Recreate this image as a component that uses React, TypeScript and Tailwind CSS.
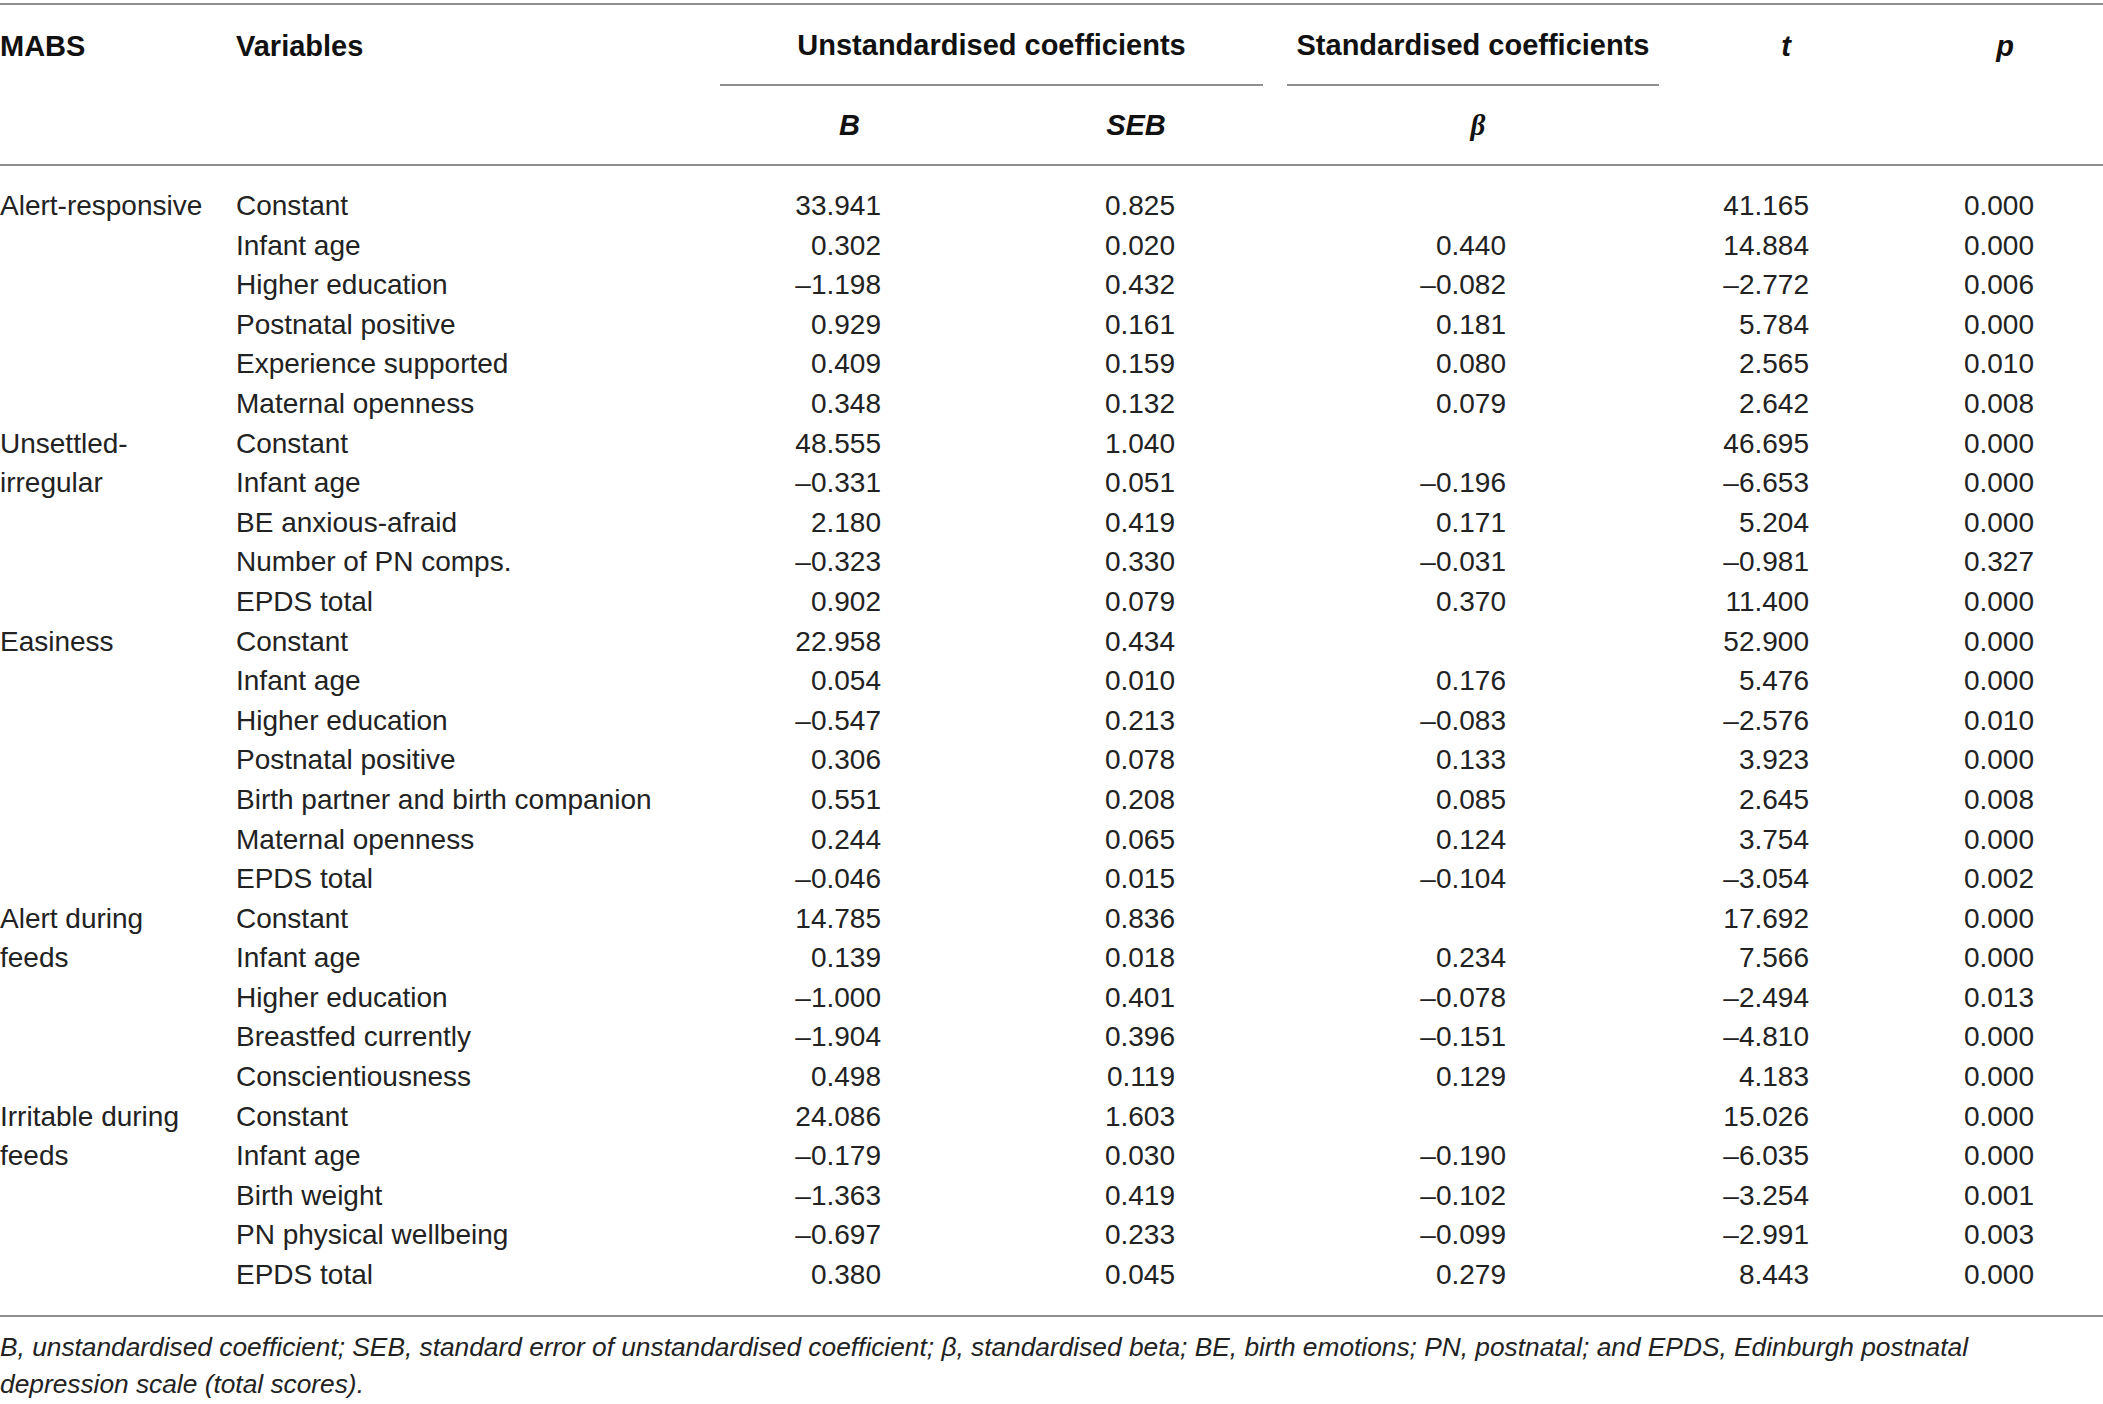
type Row = [string, string, string, string, string, string];

type Group = { label: string[]; rows: Row[] };

const groups: Group[] = [
  {
    label: ['Alert-responsive'],
    rows: [
      ['Constant', '33.941', '0.825', '', '41.165', '0.000'],
      ['Infant age', '0.302', '0.020', '0.440', '14.884', '0.000'],
      ['Higher education', '–1.198', '0.432', '–0.082', '–2.772', '0.006'],
      ['Postnatal positive', '0.929', '0.161', '0.181', '5.784', '0.000'],
      ['Experience supported', '0.409', '0.159', '0.080', '2.565', '0.010'],
      ['Maternal openness', '0.348', '0.132', '0.079', '2.642', '0.008']
    ]
  },
  {
    label: ['Unsettled-', 'irregular'],
    rows: [
      ['Constant', '48.555', '1.040', '', '46.695', '0.000'],
      ['Infant age', '–0.331', '0.051', '–0.196', '–6.653', '0.000'],
      ['BE anxious-afraid', '2.180', '0.419', '0.171', '5.204', '0.000'],
      ['Number of PN comps.', '–0.323', '0.330', '–0.031', '–0.981', '0.327'],
      ['EPDS total', '0.902', '0.079', '0.370', '11.400', '0.000']
    ]
  },
  {
    label: ['Easiness'],
    rows: [
      ['Constant', '22.958', '0.434', '', '52.900', '0.000'],
      ['Infant age', '0.054', '0.010', '0.176', '5.476', '0.000'],
      ['Higher education', '–0.547', '0.213', '–0.083', '–2.576', '0.010'],
      ['Postnatal positive', '0.306', '0.078', '0.133', '3.923', '0.000'],
      ['Birth partner and birth companion', '0.551', '0.208', '0.085', '2.645', '0.008'],
      ['Maternal openness', '0.244', '0.065', '0.124', '3.754', '0.000'],
      ['EPDS total', '–0.046', '0.015', '–0.104', '–3.054', '0.002']
    ]
  },
  {
    label: ['Alert during', 'feeds'],
    rows: [
      ['Constant', '14.785', '0.836', '', '17.692', '0.000'],
      ['Infant age', '0.139', '0.018', '0.234', '7.566', '0.000'],
      ['Higher education', '–1.000', '0.401', '–0.078', '–2.494', '0.013'],
      ['Breastfed currently', '–1.904', '0.396', '–0.151', '–4.810', '0.000'],
      ['Conscientiousness', '0.498', '0.119', '0.129', '4.183', '0.000']
    ]
  },
  {
    label: ['Irritable during', 'feeds'],
    rows: [
      ['Constant', '24.086', '1.603', '', '15.026', '0.000'],
      ['Infant age', '–0.179', '0.030', '–0.190', '–6.035', '0.000'],
      ['Birth weight', '–1.363', '0.419', '–0.102', '–3.254', '0.001'],
      ['PN physical wellbeing', '–0.697', '0.233', '–0.099', '–2.991', '0.003'],
      ['EPDS total', '0.380', '0.045', '0.279', '8.443', '0.000']
    ]
  }
];

const rule = 'border-[#8f8f8f]';

export default function App() {
  return (
    <div className="min-h-screen w-[2103px] bg-white pt-[3px] font-['Liberation_Sans',Arial,sans-serif] text-[#222]">
      <div className={`border-t-2 ${rule}`}>
        <table className="w-full table-fixed border-collapse">
          <colgroup>
            <col className="w-[236px]" />
            <col className="w-[472px]" />
            <col className="w-[283px]" />
            <col className="w-[284px]" />
            <col className="w-[396px]" />
            <col className="w-[226px]" />
            <col className="w-[206px]" />
          </colgroup>
          <thead className="text-[29px] font-bold text-[#111]">
            <tr>
              <th className="h-[81px] p-0 pt-[3px] text-left align-middle">MABS</th>
              <th className="p-0 pt-[3px] text-left align-middle">Variables</th>
              <th colSpan={2} className="p-0 align-top">
                <div className={`mx-[12px] flex h-[81px] items-center justify-center border-b-2 pt-[3px] ${rule}`}>
                  Unstandardised coefficients
                </div>
              </th>
              <th className="p-0 align-top">
                <div className={`mx-[12px] flex h-[81px] items-center justify-center border-b-2 pt-[3px] ${rule}`}>
                  Standardised coefficients
                </div>
              </th>
              <th className="p-0 pl-[4px] pt-[3px] text-center align-middle italic">t</th>
              <th className="p-0 pl-[10px] pt-[3px] text-center align-middle italic">p</th>
            </tr>
            <tr className={`border-b-2 ${rule}`}>
              <th className="h-[79px] p-0" />
              <th className="p-0" />
              <th className="p-0 pt-[2px] text-center align-middle italic">B</th>
              <th className="p-0 pl-[6px] pt-[2px] text-center align-middle italic">SEB</th>
              <th className="p-0 pl-[10px] pt-[2px] text-center align-middle font-['Liberation_Serif',serif] italic">β</th>
              <th className="p-0" />
              <th className="p-0" />
            </tr>
          </thead>
          <tbody className="text-[28px] leading-[39.6px]">
            <tr>
              <td colSpan={7} className="h-[21px] p-0" />
            </tr>
            {groups.map(g =>
              g.rows.map((r, i) => (
                <tr key={g.label.join('') + i}>
                  {i === 0 && (
                    <td rowSpan={g.rows.length} className="p-0 align-top whitespace-nowrap">
                      {g.label.map(l => (
                        <div key={l}>{l}</div>
                      ))}
                    </td>
                  )}
                  <td className="h-[39.6px] p-0 whitespace-nowrap">{r[0]}</td>
                  <td className="p-0 pr-[110px] text-right">{r[1]}</td>
                  <td className="p-0 pr-[100px] text-right">{r[2]}</td>
                  <td className="p-0 pr-[165px] text-right">{r[3]}</td>
                  <td className="p-0 pr-[88px] text-right">{r[4]}</td>
                  <td className="p-0 pr-[69px] text-right">{r[5]}</td>
                </tr>
              ))
            )}
            <tr>
              <td colSpan={7} className="h-[20px] p-0" />
            </tr>
          </tbody>
        </table>
      </div>
      <div className={`border-t-2 ${rule} pt-[12px] text-[26.3px] leading-[37px] italic`}>
        B, unstandardised coefficient; SEB, standard error of unstandardised coefficient; β, standardised beta; BE, birth
        emotions; PN, postnatal; and EPDS, Edinburgh postnatal
        <br />
        depression scale (total scores).
      </div>
    </div>
  );
}
